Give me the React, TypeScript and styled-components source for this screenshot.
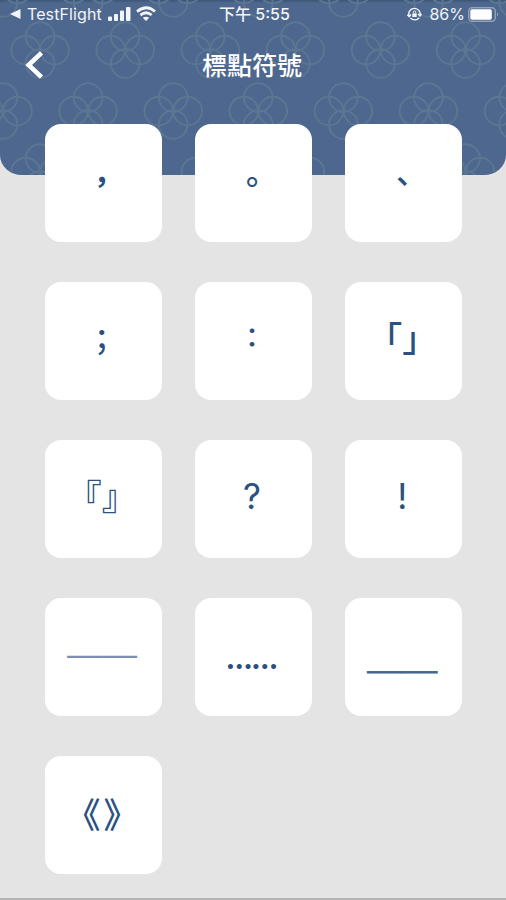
import React from "react";
import styled, { createGlobalStyle } from "styled-components";

const GlobalStyle = createGlobalStyle`
  * { box-sizing: border-box; }
  body { margin: 0; background: #e4e4e4; }
`;

const Screen = styled.main`
  position: relative;
  width: 506px;
  height: 900px;
  overflow: hidden;
  background: #e4e4e4;
  border-bottom: 2px solid #b4b4b4;
  font-family: "Noto Sans CJK TC", sans-serif;
`;

const Header = styled.header`
  position: relative;
  height: 175px;
  overflow: hidden;
  color: #fff;
  background: linear-gradient(#3c5577 0, #4d678e 3px);
  border-radius: 0 0 22px 22px / 0 0 20px 20px;
`;

const Pattern = styled.svg`
  position: absolute;
  inset: 0;
  fill: none;
  stroke: #5b7692;
  stroke-width: 2;
`;

const StatusBar = styled.div`
  position: relative;
  display: grid;
  grid-template-columns: 1fr auto 1fr;
  align-items: center;
  height: 28px;
  padding: 0 7px 0 10px;
  color: #f1f4f8;
  font-family: Inter, "Noto Sans CJK TC", sans-serif;
  font-size: 16px;
  line-height: 28px;
`;

const StatusGroup = styled.div<{ $end?: boolean }>`
  display: flex;
  align-items: center;
  justify-content: ${(p) => (p.$end ? "flex-end" : "flex-start")};
`;

const AppName = styled.span`
  width: 75px;
  margin: 0 6px 0 6px;
  font-size: 16px;
  letter-spacing: 0.1px;
`;

const Clock = styled.time`
  font-weight: 500;
  font-size: 16px;
`;

const Percent = styled.span`
  margin: 0 3px 0 7px;
  font-size: 16px;
`;

const TitleBar = styled.div`
  position: relative;
  display: grid;
  grid-template-columns: 60px 1fr 60px;
  align-items: center;
  height: 74px;
`;

const BackButton = styled.button`
  display: flex;
  padding: 0 0 0 23px;
  border: 0;
  background: none;
  color: inherit;
`;

const Title = styled.h1`
  margin: 0;
  padding: 0 2px 2px 0;
  text-align: center;
  font-size: 25px;
  font-weight: 500;
  line-height: 36px;
`;

const Grid = styled.section`
  position: relative;
  display: grid;
  grid-template-columns: repeat(3, 117px);
  grid-auto-rows: 117.5px;
  column-gap: 33.2px;
  row-gap: 40.6px;
  margin: -51px 0 0 45px;
`;

const Card = styled.button`
  display: flex;
  align-items: center;
  justify-content: center;
  padding: 0;
  border: 0;
  border-radius: 16px;
  background: #fff;
  color: #2a5180;
`;

interface MarkStyle {
  $family?: string;
  $size?: number;
  $x?: number;
  $y?: number;
  $spacing?: string;
  $half?: boolean;
  $weight?: number;
  $color?: string;
  $stroke?: string;
}

const Mark = styled.span<MarkStyle>`
  font-family: ${(p) => (p.$family ? `"${p.$family}", ` : "")}"Noto Sans CJK TC", sans-serif;
  font-size: ${(p) => p.$size ?? 35}px;
  font-weight: ${(p) => p.$weight ?? 500};
  line-height: 1;
  white-space: nowrap;
  letter-spacing: ${(p) => p.$spacing ?? "0"};
  font-feature-settings: ${(p) => (p.$half ? '"halt"' : "normal")};
  color: ${(p) => p.$color ?? "inherit"};
  -webkit-text-stroke: ${(p) => p.$stroke ?? "0"};
  transform: translate(${(p) => p.$x ?? -1.7}px, ${(p) => p.$y ?? 0}px);
`;

const marks: ({ text: string } & MarkStyle)[] = [
  { text: "，", $size: 29, $weight: 700, $y: -1.9 },
  { text: "。", $size: 32, $y: -3.3 },
  { text: "、", $size: 31, $y: -3.4 },
  { text: "；", $size: 30, $y: -3.2 },
  { text: "：", $size: 27.5, $y: -3.8 },
  { text: "「」", $half: true, $y: -3.9 },
  { text: "『』", $half: true, $y: -3.7 },
  { text: "?", $family: "Inter", $weight: 400, $y: -1.7 },
  { text: "!", $family: "Inter", $weight: 400, $y: -1.7 },
  { text: "——", $family: "Liberation Sans", $weight: 400, $color: "#7d8eb0", $x: -1.5, $y: -4.5 },
  { text: "……", $family: "Lato", $weight: 700, $size: 33, $y: -1 },
  { text: "＿＿", $weight: 700, $color: "#46658f", $stroke: "0.8px #46658f", $y: -4.2 },
  { text: "《》", $half: true, $spacing: "3px", $x: 0, $y: -3 },
];

const rows = [
  { y: -11, x: 3 },
  { y: 50, x: -45 },
  { y: 111, x: 3 },
  { y: 172, x: -45 },
];

const Flowers = () => (
  <Pattern width="506" height="175">
    {rows.flatMap(({ x, y }) =>
      Array.from({ length: 7 }, (_, i) => (
        <g key={`${y}-${i}`} transform={`translate(${x + i * 85.1} ${y})`}>
          <circle cx="-14.5" r="14.3" />
          <circle cx="14.5" r="14.3" />
          <circle cy="-13.5" r="14.3" />
          <circle cy="13.5" r="14.3" />
        </g>
      ))
    )}
  </Pattern>
);

export default function App() {
  return (
    <Screen>
      <GlobalStyle />
      <Header>
        <Flowers />
        <StatusBar>
          <StatusGroup>
            <svg width="11" height="12" fill="currentColor"><path d="M0 6 10.5 1v10z" /></svg>
            <AppName>TestFlight</AppName>
            <svg width="23" height="16" fill="currentColor">
              <rect y="10.5" width="4" height="4.5" rx="1" />
              <rect x="6" y="8" width="4" height="7" rx="1" />
              <rect x="12" y="4.5" width="4" height="10.5" rx="1" />
              <rect x="18" y="1" width="4.5" height="14" rx="1" />
            </svg>
            <svg width="26" height="16" viewBox="-5 0 26 16" fill="none" stroke="currentColor" strokeWidth="2.7">
              <path d="M1 5.6q9.5-7.7 18 0M4.4 9.1q5.8-4.7 11.2 0" />
              <path d="m10 15-3.2-3.2q3.2-2.3 6.4 0z" fill="currentColor" stroke="none" />
            </svg>
          </StatusGroup>
          <Clock>下午 5:55</Clock>
          <StatusGroup $end>
            <svg width="15" height="14" viewBox="0 0 15 14" fill="none" stroke="currentColor" strokeWidth="1.4">
              <path d="M2.3 9.5A5.7 5.7 0 1 1 12.8 9M12.2 10.7A5.7 5.7 0 0 1 3.5 11M.2 7.8l2.1 2 1.7-2.4M11 7l2 2 1.5-2" />
              <rect x="5.3" y="6.4" width="4.4" height="3.6" fill="currentColor" stroke="none" />
              <path d="M6.3 6.5V5.2a1.2 1.2 0 0 1 2.4 0v1.3" strokeWidth="1" />
            </svg>
            <Percent>86%</Percent>
            <svg width="31" height="15" viewBox="0 0 31 15">
              <rect x=".7" y=".7" width="26.6" height="13.6" rx="3.5" fill="none" stroke="#91a2b9" strokeWidth="1.4" />
              <rect x="2.3" y="2.3" width="21.5" height="10.4" rx="1.7" fill="#fff" />
              <path d="M29 5.2q2.4 2.3 0 4.6z" fill="#91a2b9" />
            </svg>
          </StatusGroup>
        </StatusBar>
        <TitleBar>
          <BackButton aria-label="返回">
            <svg width="22" height="30" fill="none" stroke="currentColor" strokeWidth="4.6">
              <path d="M18.5 2.8 5.6 15l12.9 12.2" />
            </svg>
          </BackButton>
          <Title>標點符號</Title>
        </TitleBar>
      </Header>
      <Grid>
        {marks.map(({ text, ...look }) => (
          <Card key={text}>
            <Mark {...look}>{text}</Mark>
          </Card>
        ))}
      </Grid>
    </Screen>
  );
}
